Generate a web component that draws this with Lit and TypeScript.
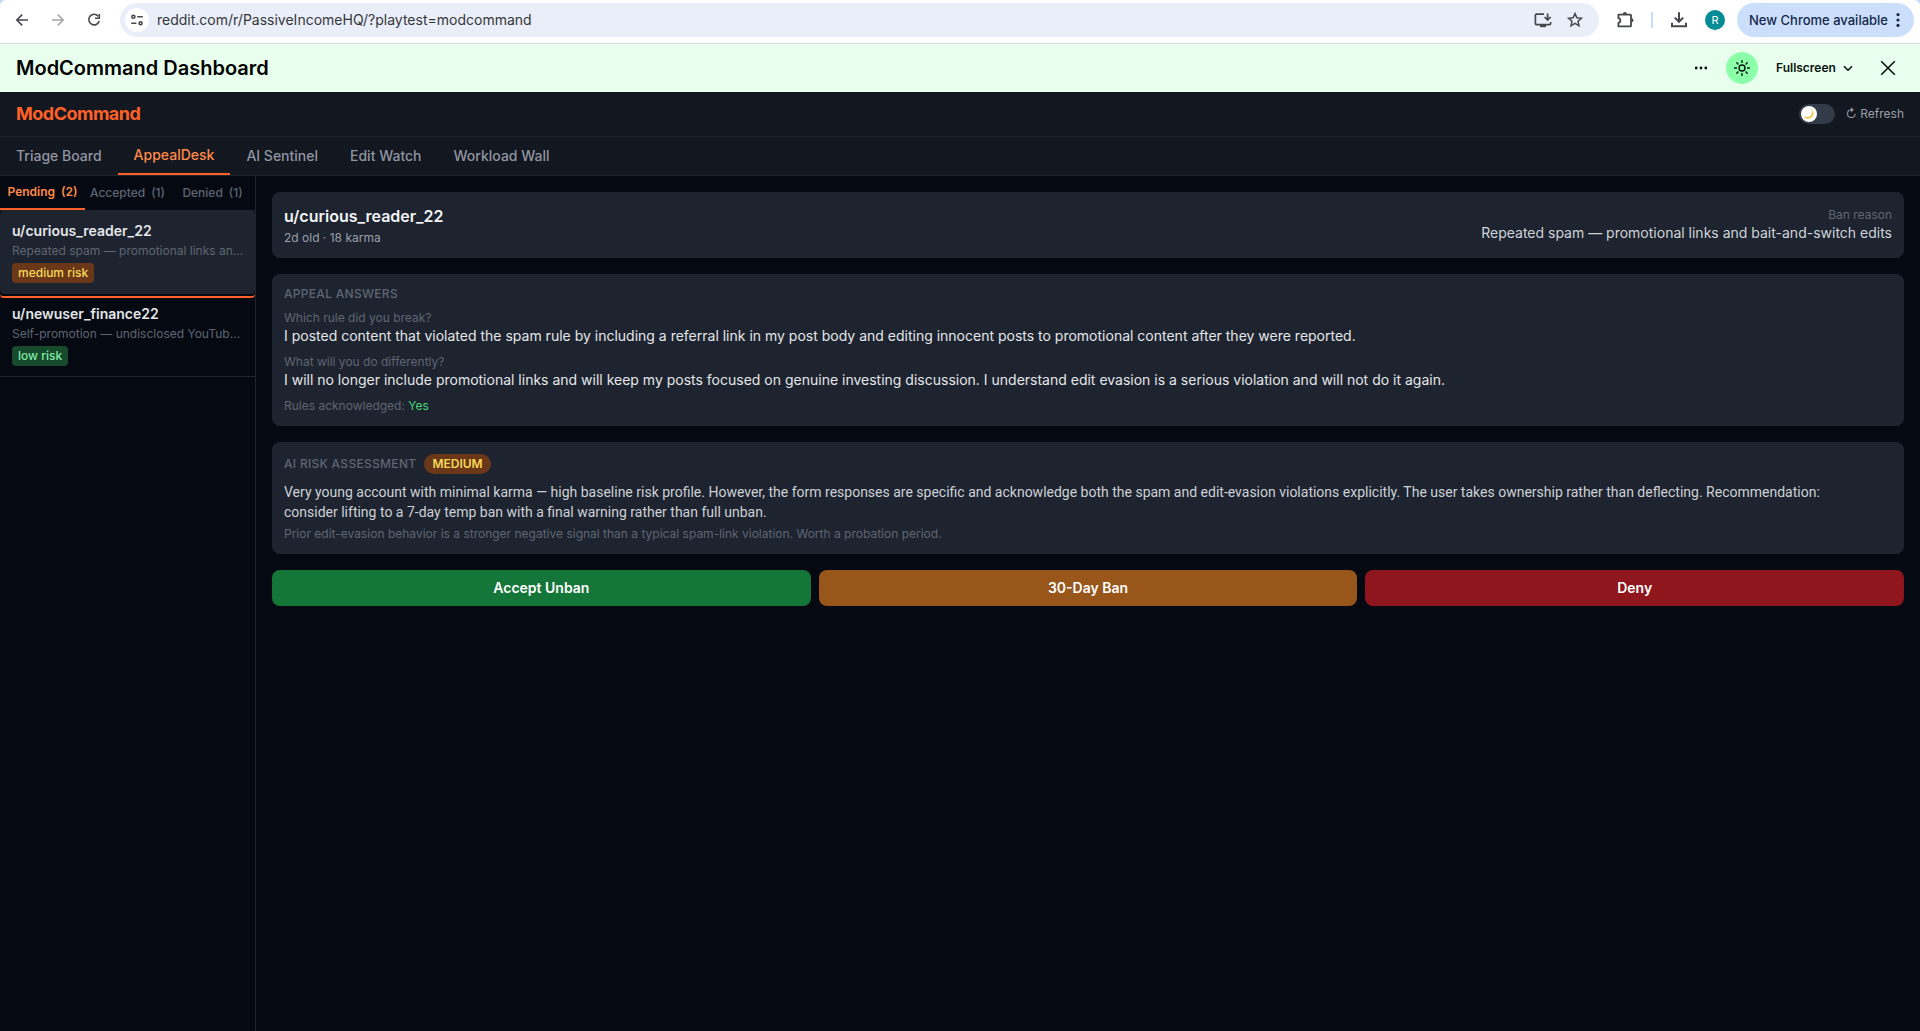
import { LitElement, html, css, svg } from "lit";
import { customElement, property, state } from "lit/decorators.js";
import { classMap } from "lit/directives/class-map.js";

type Risk = "low" | "medium";

interface Appeal {
  user: string;
  preview: string;
  risk: Risk;
}

const APPEALS: Appeal[] = [
  { user: "u/curious_reader_22", preview: "Repeated spam — promotional links an…", risk: "medium" },
  { user: "u/newuser_finance22", preview: "Self-promotion — undisclosed YouTub…", risk: "low" },
];

const reset = css`
  *, *::before, *::after { box-sizing: border-box; }
  button, input, select { font: inherit; color: inherit; margin: 0; padding: 0; border: 0; background: none; }
  button, select { cursor: pointer; }
  h1, h2, h3, p, dl, dt, dd, ul { margin: 0; padding: 0; font-weight: inherit; font-size: inherit; }
  ul { list-style: none; }
  svg { display: block; flex: none; }
`;

const line = (body: unknown, size = 20, width = 2) => html`<svg
  width=${size} height=${size} viewBox="0 0 20 20" fill="none" stroke="currentColor"
  stroke-width=${width} aria-hidden="true">${body}</svg>`;

const icons = {
  back: line(svg`<path d="M16 10H5M10.2 4.6L4.8 10l5.4 5.4" />`, 20, 1.6),
  forward: line(svg`<path d="M4 10h11M9.8 4.6l5.4 5.4-5.4 5.4" />`, 20, 1.6),
  reload: line(svg`<path d="M14.2 6.2A5.3 5.3 0 1 0 15.2 11" /><path d="M15.3 4v4.3H11" />`, 20, 1.6),
  site: line(svg`<circle cx="6.4" cy="6.8" r="1.5" /><path d="M10.2 6.8H15.8M4.2 13.2h5.2" /><circle cx="13.6" cy="13.2" r="1.5" />`, 20, 1.6),
  install: line(svg`<path d="M11 4.2H3.4a1 1 0 0 0-1 1v8.4a1 1 0 0 0 1 1h13.2a1 1 0 0 0 1-1V12" /><path d="M7 16h6" stroke-width="2.4" /><path d="M14.6 3.4v6.4M11.6 7l3 3L17.6 7" />`, 20, 1.7),
  star: line(svg`<path d="M10 3.6l1.9 4.2 4.5.5-3.4 3 1 4.5-4-2.4-4 2.4 1-4.5-3.4-3 4.5-.5z" stroke-linejoin="miter" />`, 20, 1.5),
  puzzle: line(svg`<path d="M3.4 4.6h12a.6.6 0 0 1 .6.6v10.6a.6.6 0 0 1-.6.6h-12v-3.6c2.6-.2 2.6-4.4 0-4.6z" stroke-linejoin="round" /><path d="M7.8 4.2a2.1 2.1 0 0 1 4.2 0zM16.4 8.2a2.1 2.1 0 0 1 0 4.2z" fill="currentColor" stroke="none" />`, 20, 1.8),
  download: line(svg`<path d="M10 2.2v9.4M5.8 7.6L10 11.8l4.2-4.2M3 12.8v3.4h14v-3.4" />`, 20, 2),
  kebab: html`<svg width="4" height="16" viewBox="0 0 4 16" fill="currentColor" aria-hidden="true"><circle cx="2" cy="2.6" r="1.6" /><circle cx="2" cy="8" r="1.6" /><circle cx="2" cy="13.4" r="1.6" /></svg>`,
  more: html`<svg width="14" height="4" viewBox="0 0 14 4" fill="currentColor" aria-hidden="true"><circle cx="2.2" cy="2" r="1.4" /><circle cx="7" cy="2" r="1.4" /><circle cx="11.8" cy="2" r="1.4" /></svg>`,
  sun: line(svg`<circle cx="10" cy="10" r="3" /><path d="M10 2.6v1.8M10 15.6v1.8M2.6 10h1.8M15.6 10h1.8M4.8 4.8L6 6M14 14l1.2 1.2M4.8 15.2L6 14M14 6l1.2-1.2" stroke-linecap="round" />`, 20, 1.4),
  chevron: line(svg`<path d="M6 8.2l4 4 4-4" />`, 20, 1.6),
  close: line(svg`<path d="M3.2 3.2l13.6 13.6M16.8 3.2L3.2 16.8" />`, 20, 1.6),
  moon: html`<svg width="12" height="12" viewBox="0 0 12 12" aria-hidden="true"><path d="M7.4.6a5.4 5.4 0 1 1-7 7.3A5 5 0 0 0 7.4.6z" fill="#f7d56a" /><path d="M1.8 8.8a5 5 0 0 0 7.8-5" fill="none" stroke="#e3b146" stroke-width=".7" /></svg>`,
};

@customElement("browser-bar")
class BrowserBar extends LitElement {
  static styles = [reset, css`
    :host { display: block; background: #c3d9fb; color: #46484b; }
    .bar { display: flex; align-items: center; height: 44px; padding: 0 6px 4px 12px; background: #fff; border-bottom: 1px solid #d8dfdc; border-radius: 6px 6px 0 0; }
    .nav { display: flex; gap: 16px; margin-right: 16px; }
    .nav .off { color: #a5a7a9; }
    .address { display: flex; align-items: center; flex: 1; min-width: 0; height: 34px; padding: 0 14px 0 5px; border-radius: 17px; background: #e9eef9; }
    .site { display: grid; place-items: center; width: 24px; height: 24px; margin-right: 8px; border-radius: 50%; background: #fff; }
    .url { flex: 1; min-width: 0; font-size: 14px; line-height: 20px; color: #35373a; outline: none; }
    .inside { display: flex; gap: 12px; }
    .tools { display: flex; align-items: center; gap: 16px; margin: 0 12px 0 16px; }
    .rule { width: 2px; height: 16px; background: #c9dcfa; }
    .avatar { width: 20px; height: 20px; border-radius: 50%; background: #058c96; color: #fff; font-size: 11px; line-height: 20px; }
    .update { display: flex; align-items: center; gap: 8px; height: 34px; padding: 0 14px 0 12px; border-radius: 17px; background: #cbdefb; color: #14294d; font-size: 13px; font-weight: 500; }
  `];

  render() {
    return html`<div class="bar">
      <div class="nav">
        <button aria-label="Back">${icons.back}</button>
        <button class="off" aria-label="Forward" disabled>${icons.forward}</button>
        <button aria-label="Reload">${icons.reload}</button>
      </div>
      <div class="address">
        <button class="site" aria-label="Site information">${icons.site}</button>
        <input class="url" type="text" aria-label="Address" .value=${"reddit.com/r/PassiveIncomeHQ/?playtest=modcommand"} />
        <div class="inside">
          <button aria-label="Install">${icons.install}</button>
          <button aria-label="Bookmark">${icons.star}</button>
        </div>
      </div>
      <div class="tools">
        <button aria-label="Extensions">${icons.puzzle}</button>
        <span class="rule"></span>
        <button aria-label="Downloads">${icons.download}</button>
        <button class="avatar" aria-label="Profile R">R</button>
      </div>
      <button class="update">New Chrome available ${icons.kebab}</button>
    </div>`;
  }
}

@customElement("appeal-list")
class AppealList extends LitElement {
  @property({ attribute: false }) appeals: Appeal[] = [];
  @state() private selected = 0;

  static styles = [reset, css`
    :host { display: block; border-right: 1px solid #1f252f; }
    .filters { display: flex; border-bottom: 1px solid #1f252f; }
    .filter { display: flex; flex: 1; justify-content: center; gap: 6px; height: 34px; padding: 9px 0; color: #5f6572; font-size: 12px; font-weight: 500; line-height: 16px; }
    .filter.on { padding: 8px 0; border-bottom: 2px solid #ff6128; color: #ff8a47; font-weight: 600; }
    .row { position: relative; display: flex; flex-direction: column; align-items: flex-start; width: 100%; padding: 10px 8px 10px 12px; border-bottom: 1px solid #1f252f; text-align: left; }
    .row.on { border-radius: 4px; background: #1d242f; border-color: #1d242f; }
    .row.on::after { content: ""; position: absolute; inset: auto 0 -5px; height: 6px; border-bottom: 2px solid #ff6128; border-radius: 0 0 4px 4px; }
    .name { color: #e4e6e9; font-size: 14px; font-weight: 600; line-height: 20px; }
    .reason { margin: 2px 0 4px; color: #5f6572; font-size: 12px; line-height: 16px; white-space: nowrap; }
    .risk { padding: 2px 6px; border-radius: 4px; font-size: 12px; font-weight: 500; line-height: 16px; }
    .medium { background: #6a3819; color: #f8d858; }
    .low { background: #174a2b; color: #82eaa8; }
  `];

  render() {
    return html`<nav class="filters" aria-label="Appeal status">
        <button class="filter on"><span>Pending</span><span>(2)</span></button>
        <button class="filter"><span>Accepted</span><span>(1)</span></button>
        <button class="filter"><span>Denied</span><span>(1)</span></button>
      </nav>
      <ul>${this.appeals.map((a, i) => html`<li>
        <button class=${classMap({ row: true, on: i === this.selected })} @click=${() => (this.selected = i)}>
          <span class="name">${a.user}</span>
          <span class="reason">${a.preview}</span>
          <span class="risk ${a.risk}">${a.risk} risk</span>
        </button></li>`)}</ul>`;
  }
}

@customElement("appeal-detail")
class AppealDetail extends LitElement {
  static styles = [reset, css`
    :host { display: flex; flex-direction: column; gap: 16px; padding: 16px; }
    .card { padding: 12px; border-radius: 8px; background: #1d242f; font-size: 14px; line-height: 20px; }
    .head { display: flex; align-items: center; justify-content: space-between; }
    .name { margin-bottom: 2px; color: #f3f4f6; font-size: 16px; font-weight: 600; line-height: 24px; }
    .small { color: #5f6572; font-size: 12px; line-height: 16px; }
    .meta { color: #9a9fa9; }
    .reason { text-align: right; color: #d0d3d9; }
    .title { color: #5f6572; font-size: 12px; font-weight: 500; line-height: 16px; letter-spacing: 0.3px; text-transform: uppercase; }
    .answer { margin: 0 0 8px; color: #e4e6e9; }
    .answers { margin-top: 8px; }
    .yes { color: #48d67c; }
    .risk { display: flex; align-items: center; gap: 8px; margin-bottom: 8px; }
    .level { padding: 2px 8px; border-radius: 10px; background: #6a3819; color: #f8d858; font-size: 12px; font-weight: 600; line-height: 16px; }
    .summary { margin-bottom: 4px; color: #cdd0d6; font-family: Roboto, Inter, sans-serif; }
    .actions { display: grid; grid-template-columns: repeat(3, 1fr); gap: 8px; }
    .action { height: 36px; border-radius: 8px; color: #fff; font-size: 14px; font-weight: 600; line-height: 20px; }
    .accept { background: #147639; }
    .temp { background: #98561b; }
    .deny { background: #8e161c; }
  `];

  render() {
    return html`<section class="card head">
        <div>
          <h2 class="name">u/curious_reader_22</h2>
          <p class="small meta">2d old · 18 karma</p>
        </div>
        <div class="reason">
          <p class="small">Ban reason</p>
          <p>Repeated spam — promotional links and bait-and-switch edits</p>
        </div>
      </section>
      <section class="card">
        <h3 class="title">Appeal answers</h3>
        <dl class="answers">
          <dt class="small">Which rule did you break?</dt>
          <dd class="answer">I posted content that violated the spam rule by including a referral link in my post body and editing innocent posts to promotional content after they were reported.</dd>
          <dt class="small">What will you do differently?</dt>
          <dd class="answer">I will no longer include promotional links and will keep my posts focused on genuine investing discussion. I understand edit evasion is a serious violation and will not do it again.</dd>
        </dl>
        <p class="small">Rules acknowledged: <span class="yes">Yes</span></p>
      </section>
      <section class="card">
        <div class="risk"><h3 class="title">AI risk assessment</h3><span class="level">MEDIUM</span></div>
        <p class="summary">Very young account with minimal karma — high baseline risk profile. However, the form responses are specific and acknowledge both the spam and edit-evasion violations explicitly. The user takes ownership rather than deflecting. Recommendation:<br />consider lifting to a 7-day temp ban with a final warning rather than full unban.</p>
        <p class="small">Prior edit-evasion behavior is a stronger negative signal than a typical spam-link violation. Worth a probation period.</p>
      </section>
      <div class="actions">
        <button class="action accept">Accept Unban</button>
        <button class="action temp">30-Day Ban</button>
        <button class="action deny">Deny</button>
      </div>`;
  }
}

@customElement("app-root")
class AppRoot extends LitElement {
  @state() private tab = "AppealDesk";
  private tabs = ["Triage Board", "AppealDesk", "AI Sentinel", "Edit Watch", "Workload Wall"];

  static styles = [reset, css`
    :host { display: flex; flex-direction: column; min-height: 100vh; background: #050a12; font-family: Inter, "Liberation Sans", sans-serif; }
    .window { display: flex; align-items: center; justify-content: space-between; height: 48px; padding: 0 16px; background: #e8ffee; color: #0a130d; }
    .heading { color: #000; font-size: 20px; font-weight: 600; line-height: 28px; }
    .controls { display: flex; align-items: center; }
    .theme { display: grid; place-items: center; width: 32px; height: 32px; margin: 0 18px; border-radius: 50%; background: #8cffa9; }
    .mode { display: flex; align-items: center; gap: 2px; margin-right: 14px; font-size: 12px; font-weight: 600; line-height: 16px; }
    .mode select { appearance: none; outline: none; }
    .close { display: grid; place-items: center; width: 32px; height: 32px; }
    .brandbar { display: flex; align-items: center; justify-content: space-between; height: 45px; padding: 0 16px; border-bottom: 1px solid #1f252f; background: #131720; }
    .brand { color: #ff6128; font-size: 18px; font-weight: 700; line-height: 28px; letter-spacing: -0.5px; }
    .tools { display: flex; align-items: center; gap: 10px; }
    .toggle { position: relative; display: block; width: 36px; height: 20px; border-radius: 10px; background: #323b47; }
    .toggle input { position: absolute; inset: 0; width: 100%; height: 100%; opacity: 0; cursor: pointer; }
    .knob { display: grid; place-items: center; width: 16px; height: 16px; margin: 2px; position: absolute; border-radius: 50%; background: #fff; }
    .refresh { color: #9a9fa9; font-size: 12px; line-height: 16px; }
    .tabs { display: flex; height: 39px; border-bottom: 1px solid #1f252f; background: #131720; }
    .tab { padding: 0 16px; color: #8f95a1; font-size: 14px; font-weight: 500; line-height: 20px; }
    .tab.on { border-bottom: 2px solid #ff6128; color: #ff8a47; }
    .body { display: grid; grid-template-columns: 256px minmax(0, 1fr); flex: 1; }
  `];

  render() {
    return html`<browser-bar></browser-bar>
      <header class="window">
        <h1 class="heading">ModCommand Dashboard</h1>
        <div class="controls">
          <button aria-label="More options">${icons.more}</button>
          <button class="theme" aria-label="Theme">${icons.sun}</button>
          <label class="mode"><select aria-label="View size"><option>Fullscreen</option></select>${icons.chevron}</label>
          <button class="close" aria-label="Close">${icons.close}</button>
        </div>
      </header>
      <div class="brandbar">
        <span class="brand">ModCommand</span>
        <div class="tools">
          <label class="toggle"><span class="knob">${icons.moon}</span><input type="checkbox" aria-label="Light theme" /></label>
          <button class="refresh">↻ Refresh</button>
        </div>
      </div>
      <nav class="tabs" aria-label="Sections">
        ${this.tabs.map((t) => html`<button class=${classMap({ tab: true, on: t === this.tab })} @click=${() => (this.tab = t)}>${t}</button>`)}
      </nav>
      <main class="body">
        <appeal-list .appeals=${APPEALS}></appeal-list>
        <appeal-detail></appeal-detail>
      </main>`;
  }
}
